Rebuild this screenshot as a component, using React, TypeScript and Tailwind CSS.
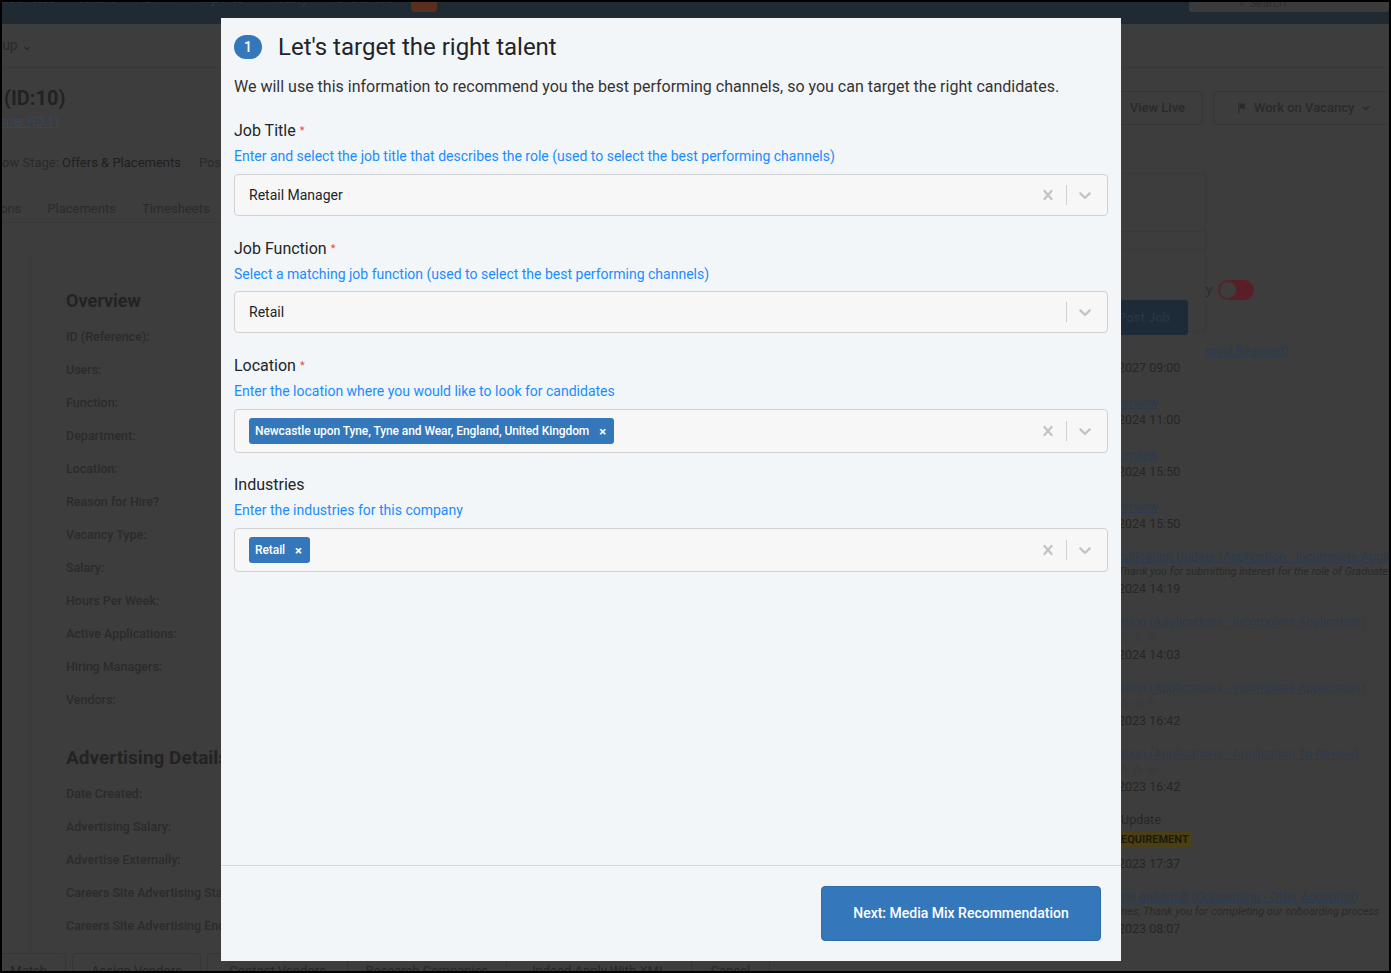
import React from "react";

const Chevron = ({ className = "" }: { className?: string }) => (
  <svg viewBox="0 0 20 20" className={className} fill="currentColor">
    <path d="M4.516 7.548c0.436-0.446 1.043-0.481 1.576 0l3.908 3.747 3.908-3.747c0.533-0.481 1.141-0.446 1.574 0 0.436 0.445 0.408 1.197 0 1.615-0.406 0.418-4.695 4.502-4.695 4.502-0.217 0.223-0.502 0.335-0.787 0.335s-0.57-0.112-0.789-0.335c0 0-4.287-4.084-4.695-4.502s-0.436-1.17 0-1.615z" />
  </svg>
);

const Cross = ({ className = "" }: { className?: string }) => (
  <svg viewBox="0 0 20 20" className={className} fill="currentColor">
    <path d="M14.348 14.849c-0.469 0.469-1.229 0.469-1.697 0l-2.651-3.030-2.651 3.029c-0.469 0.469-1.229 0.469-1.697 0-0.469-0.469-0.469-1.229 0-1.697l2.758-3.15-2.759-3.152c-0.469-0.469-0.469-1.228 0-1.697s1.228-0.469 1.697 0l2.652 3.031 2.651-3.031c0.469-0.469 1.228-0.469 1.697 0s0.469 1.229 0 1.697l-2.758 3.152 2.758 3.150c0.469 0.469 0.469 1.229 0 1.698z" />
  </svg>
);

function Indicators({ clear }: { clear: boolean }) {
  return (
    <div className="flex items-center self-stretch">
      {clear && (
        <div className="px-[4px] text-[#c4c4c4]">
          <Cross className="w-[20px] h-[20px]" />
        </div>
      )}
      <span className="w-px h-[20px] bg-[#d0d0d0] mx-[4px]" />
      <div className="pl-[4px] pr-[12px] text-[#c4c4c4]">
        <Chevron className="w-[20px] h-[20px]" />
      </div>
    </div>
  );
}

function Chip({ text }: { text: string }) {
  return (
    <span className="inline-flex items-center h-[26px] rounded-[3px] bg-[#3478bb] text-white text-[12px] font-medium pl-[6px] pr-[8px] tracking-[-0.08px]">
      {text}
      <span className="ml-[10px] text-[13px] font-bold leading-none">×</span>
    </span>
  );
}

function Field({
  label,
  required,
  help,
  gap = "mt-[8px]",
  children,
}: {
  label: string;
  required?: boolean;
  help: string;
  gap?: string;
  children: React.ReactNode;
}) {
  return (
    <div className="flex flex-col">
      <div className="h-[24px] text-[16px] leading-[24px] text-[#212529] flex items-start">
        <span>{label}</span>
        {required && <span className="text-[#e5484d] text-[11px] leading-none ml-[4px] mt-[6px]">*</span>}
      </div>
      <div className="mt-[3px] text-[14px] leading-[20px] text-[#1a8cff]">{help}</div>
      <div className={gap}>{children}</div>
    </div>
  );
}

const navItems = ["Vacancies", "Talent", "Admin", "Reports", "History", "Favourites"];

const overviewRows = [
  "ID (Reference):",
  "Users:",
  "Function:",
  "Department:",
  "Location:",
  "Reason for Hire?",
  "Vacancy Type:",
  "Salary:",
  "Hours Per Week:",
  "Active Applications:",
  "Hiring Managers:",
  "Vendors:",
];

const advRows = [
  "Date Created:",
  "Advertising Salary:",
  "Advertise Externally:",
  "Careers Site Advertising Start:",
  "Careers Site Advertising End:",
];

function Stars() {
  return <div className="text-[13px] leading-[16px] text-[#353535] tracking-[2px]">☆☆☆</div>;
}

const bottomButtons: [string, string][] = [
  ["Match", "w-[66px] mr-[6px] rounded-t-[4px] justify-end pr-[18px]"],
  ["Assign Vendors", "w-[129px] mr-[6px] rounded-t-[4px] justify-center"],
  ["Contact Vendors", "w-[141px] rounded-tl-[4px] justify-center"],
  ["Research Companies", "w-[159px] border-l-0 justify-center"],
  ["Indeed Apply With XML", "w-[185px] border-l-0 justify-center"],
  ["Cancel", "w-[78px] border-l-0 rounded-tr-[4px] justify-center"],
];

export default function App() {
  return (
    <div className="w-[1391px] h-[973px] relative overflow-hidden border-2 border-black bg-[#3d3d3d] font-['Roboto',sans-serif]">
      {/* Background page (dimmed) */}
      <div className="flex flex-col h-full">
        <div className="h-[22px] bg-[#1f2a33] flex items-start relative shrink-0">
          <div className="flex gap-[20px] text-[14px] leading-[14px] text-[#2e3740] mt-[-11px] ml-[-10px]">
            {navItems.map((n) => (
              <span key={n}>{n}</span>
            ))}
          </div>
          <span className="ml-[18px] mt-[-4px] w-[26px] h-[14px] rounded-[3px] bg-[#5b2f1f]" />
          <div className="ml-auto w-[200px] h-[10px] rounded-b-[3px] bg-[#3b3b3b] text-[12px] leading-[10px] text-[#2f2f2f] pl-[50px] overflow-hidden">
            <span className="relative top-[-4px]">⌕ Search</span>
          </div>
        </div>
        <div className="h-[44px] border-b border-[#383838] flex items-center shrink-0">
          <span className="text-[14px] text-[#2a2a2a] ml-[-22px]">Group ⌄</span>
        </div>
        <div className="flex flex-1 min-h-0">
          <div className="w-[1098px] shrink-0 flex flex-col">
            <div className="pt-[17px] pl-[2px]">
              <div className="text-[20px] leading-[26px] font-bold text-[#222]">(ID:10)</div>
              <div className="text-[13px] leading-[18px] text-[#34475e] underline mt-[2px] ml-[-2px]">tner (ID:1)</div>
              <div className="text-[13px] leading-[18px] mt-[23px] ml-[-2px] flex">
                <span className="text-[#2a2a2a]">ow Stage:&nbsp;</span>
                <span className="text-[#1f1f1f]">Offers &amp; Placements</span>
                <span className="text-[#2a2a2a] ml-[18px]">Position</span>
              </div>
            </div>
            <div className="mt-[27px] flex gap-[26px] text-[13px] text-[#2b2b2b] h-[24px] border-b border-[#383838] ml-[-2px]">
              <span>ons</span>
              <span>Placements</span>
              <span>Timesheets</span>
            </div>
            <div className="flex-1 ml-[28px] mt-[30px] border-l border-[#393939] pl-[35px] pt-[36px]">
              <div className="text-[18px] leading-[24px] font-bold text-[#232323]">Overview</div>
              <div className="mt-[15px] flex flex-col gap-[15px]">
                {overviewRows.map((r) => (
                  <div key={r} className="text-[12.5px] leading-[18px] font-medium text-[#2b2b2b]">{r}</div>
                ))}
              </div>
              <div className="mt-[36px] text-[19px] leading-[26px] font-bold text-[#232323]">Advertising Details</div>
              <div className="mt-[14px] flex flex-col gap-[15px]">
                {advRows.map((r) => (
                  <div key={r} className="text-[12.5px] leading-[18px] font-medium text-[#2b2b2b] whitespace-nowrap">{r}</div>
                ))}
              </div>
            </div>
          </div>
          <div className="flex-1 min-w-0 flex flex-col relative overflow-hidden">
            <div className="flex gap-[10px] mt-[23px]">
              <div className="w-[103px] shrink-0 h-[34px] rounded-[4px] border border-[#363636] flex items-center justify-end pr-[17px] text-[13px] font-medium text-[#2a2a2a]">
                View Live
              </div>
              <div className="w-[200px] shrink-0 h-[34px] rounded-l-[4px] border border-[#363636] flex items-center pl-[22px] text-[13px] font-medium text-[#2a2a2a] gap-[6px]">
                <svg viewBox="0 0 16 16" className="w-[12px] h-[12px]" fill="#2a2a2a">
                  <path d="M3 1h1.5v14H3zM5 2h8l-2 3.5L13 9H5z" />
                </svg>
                Work on Vacancy
                <Chevron className="w-[12px] h-[12px] text-[#2a2a2a]" />
              </div>
            </div>
            <div className="relative mt-[48px] w-[106px] h-[159px] border border-[#393939] border-l-0 rounded-r-[3px] shrink-0">
              <div className="absolute top-[57px] left-0 right-0 h-px bg-[#393939]" />
              <div className="absolute top-[75px] left-0 right-0 h-px bg-[#393939]" />
              <div className="absolute top-[126px] left-0 w-[88px] h-[35px] rounded-[3px] bg-[#1d2a38] text-[13px] font-medium text-[#2a3544] flex items-center justify-center">
                Post Job
              </div>
            </div>
            <div className="absolute top-[212px] left-[106px] flex items-center gap-[6px]">
              <span className="text-[13px] text-[#2b2b2b]">y</span>
              <span className="w-[36px] h-[20px] rounded-full bg-[#5a1f26] flex items-center pl-[1px]">
                <span className="w-[18px] h-[18px] rounded-full bg-[#3d3d3d] border border-[#4a2a2e]" />
              </span>
            </div>
            <div className="pl-[18px] mt-[10px] flex flex-col text-[12.5px] whitespace-nowrap">
              <div className="pl-[87px] leading-[17px] text-[#2c3b4d] underline">roval Required)</div>
              <div className="leading-[17px] text-[#262626]">2027 09:00</div>
              <div className="mt-[18px] leading-[17px] text-[#2c3b4d] underline">terview</div>
              <div className="leading-[17px] text-[#262626]">2024 11:00</div>
              <div className="mt-[18px] leading-[17px] text-[#2c3b4d] underline">terview</div>
              <div className="leading-[17px] text-[#262626]">2024 15:50</div>
              <div className="mt-[18px] leading-[17px] text-[#2c3b4d] underline">terview</div>
              <div className="leading-[17px] text-[#262626]">2024 15:50</div>
              <div className="mt-[17px] leading-[16px] text-[#2c3b4d] underline">pplication Update (Application - Incomplete Application)</div>
              <div className="leading-[13px] text-[11px] italic text-[#2a2a2a]">Thank you for submitting interest for the role of Graduate</div>
              <div className="mt-[2px] leading-[17px] text-[#262626]">2024 14:19</div>
              <div className="mt-[16px] leading-[17px] text-[#2c3b4d] underline">ation (Applications - Incomplete Application)</div>
              <Stars />
              <div className="leading-[17px] text-[#262626]">2024 14:03</div>
              <div className="mt-[16px] leading-[17px] text-[#2c3b4d] underline">ation (Applications - Incomplete Application)</div>
              <Stars />
              <div className="leading-[17px] text-[#262626]">2023 16:42</div>
              <div className="mt-[16px] leading-[17px] text-[#2c3b4d] underline">ation (Applications - Application To Review)</div>
              <Stars />
              <div className="leading-[17px] text-[#262626]">2023 16:42</div>
              <div className="mt-[16px] leading-[17px] text-[#262626]">&nbsp;Update</div>
              <div className="mt-[2px]">
                <span className="inline-block bg-[#4a3f15] text-[#1f1a08] text-[11px] font-bold leading-[16px] px-[3px] rounded-[3px]">EQUIREMENT</span>
              </div>
              <div className="mt-[6px] leading-[17px] text-[#262626]">2023 17:37</div>
              <div className="mt-[16px] leading-[17px] text-[#2c3b4d] underline">me onboard! (Onboarding - Offer Accepted)</div>
              <div className="leading-[13px] text-[11px] italic text-[#2a2a2a]">mes, Thank you for completing our onboarding process</div>
              <div className="mt-[2px] leading-[17px] text-[#262626]">2023 08:07</div>
            </div>
          </div>
        </div>
        <div className="h-[18px] shrink-0 flex text-[13px] text-[#262626] leading-[16px] overflow-hidden ml-[-2px]">
          {bottomButtons.map(([t, c]) => (
            <div key={t} className={`${c} shrink-0 h-[26px] border border-[#363636] flex pt-[9px] whitespace-nowrap`}>
              {t}
            </div>
          ))}
        </div>
      </div>

      {/* Modal */}
      <div className="absolute left-[219px] top-[16px] w-[900px] h-[943px] bg-[#f3f6f9] flex flex-col">
        <div className="flex-1 pl-[13px] pr-[13px] pt-[13px]">
          <div className="flex items-center h-[32px]">
            <span className="w-[28px] h-[24px] rounded-full bg-[#3478bb] text-white text-[14px] font-medium flex items-center justify-center">1</span>
            <span className="ml-[16px] text-[24px] leading-[32px] text-[#212529]">Let's target the right talent</span>
          </div>
          <div className="mt-[12px] text-[16px] leading-[24px] text-[#333333]">
            We will use this information to recommend you the best performing channels, so you can target the right candidates.
          </div>
          <div className="mt-[20px] flex flex-col">
            <Field label="Job Title" required help="Enter and select the job title that describes the role (used to select the best performing channels)">
              <div className="h-[42px] border border-[#d1d1d4] rounded-[4px] bg-[#f7f7f8] flex items-center">
                <span className="flex-1 pl-[14px] text-[14px] text-[#212529]">Retail Manager</span>
                <Indicators clear />
              </div>
            </Field>
            <div className="mt-[21px]">
              <Field label="Job Function" required gap="mt-[7px]" help="Select a matching job function (used to select the best performing channels)">
                <div className="h-[42px] border border-[#d1d1d4] rounded-[4px] bg-[#f7f7f8] flex items-center">
                  <span className="flex-1 pl-[14px] text-[14px] text-[#212529]">Retail</span>
                  <Indicators clear={false} />
                </div>
              </Field>
            </div>
            <div className="mt-[21px]">
              <Field label="Location" required help="Enter the location where you would like to look for candidates">
                <div className="h-[44px] border border-[#d1d1d4] rounded-[4px] bg-[#f7f7f8] flex items-center">
                  <div className="flex-1 pl-[14px]">
                    <Chip text="Newcastle upon Tyne, Tyne and Wear, England, United Kingdom" />
                  </div>
                  <Indicators clear />
                </div>
              </Field>
            </div>
            <div className="mt-[20px]">
              <Field label="Industries" help="Enter the industries for this company">
                <div className="h-[44px] border border-[#d1d1d4] rounded-[4px] bg-[#f7f7f8] flex items-center">
                  <div className="flex-1 pl-[14px]">
                    <Chip text="Retail" />
                  </div>
                  <Indicators clear />
                </div>
              </Field>
            </div>
          </div>
        </div>
        <div className="border-t border-[#d5d8db] h-[96px] flex items-center justify-end pr-[20px]">
          <button className="w-[280px] h-[55px] rounded-[4px] bg-[#3478bb] border border-[#2d6ca8] text-white text-[14px] font-medium">
            Next: Media Mix Recommendation
          </button>
        </div>
      </div>
    </div>
  );
}
